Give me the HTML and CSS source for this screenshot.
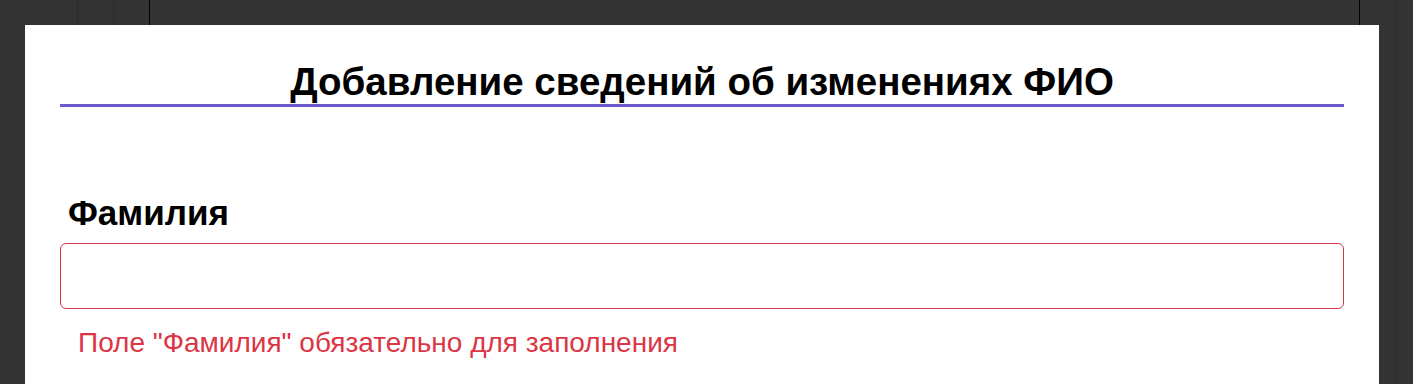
FILE: index.html
```html
<!DOCTYPE html>
<html lang="ru">
<head>
<meta charset="utf-8">
<title>Добавление сведений об изменениях ФИО</title>
<link rel="stylesheet" href="styles.css">
</head>
<body>
<div class="panel">
  <h1 class="title">Добавление сведений об изменениях ФИО</h1>
  <div class="field">
    <label class="field-label" for="surname">Фамилия</label>
    <input class="field-input is-invalid" id="surname" type="text">
    <div class="field-error">Поле "Фамилия" обязательно для заполнения</div>
  </div>
</div>
</body>
</html>
```
FILE: styles.css
```css
html, body {
  margin: 0;
  padding: 0;
  height: 100%;
}
body {
  background-color: #333333;
  background-image:
    linear-gradient(to right, transparent 77px, #2b2b2b 77px, #2b2b2b 78px, transparent 78px),
    linear-gradient(to right, transparent 113px, #2b2b2b 113px, #2b2b2b 114px, transparent 114px),
    linear-gradient(to right, transparent 149px, #000 149px, #000 150px, transparent 150px),
    linear-gradient(to right, transparent 1359px, #000 1359px, #000 1360px, transparent 1360px),
    linear-gradient(to right, transparent 1395px, #2b2b2b 1395px, #2b2b2b 1396px, transparent 1396px);
  font-family: "Liberation Sans", Arial, sans-serif;
  overflow: hidden;
}
.panel {
  margin: 25px 0 0 25px;
  width: 1354px;
  height: 359px;
  background: #ffffff;
  padding: 0 35px;
  box-sizing: border-box;
}
.title {
  margin: 0;
  padding-top: 35px;
  font-size: 38.5px;
  line-height: 44px;
  font-weight: bold;
  color: #000;
  text-align: center;
  border-bottom: 3px solid #6a5acd;
}
.field {
  display: flex;
  flex-direction: column;
  padding-top: 86px;
}
.field-label {
  font-size: 35px;
  line-height: 40px;
  font-weight: bold;
  color: #000;
  padding-left: 8px;
  margin-bottom: 10px;
}
.field-input {
  height: 66px;
  box-sizing: border-box;
  border: 1px solid #dc3545;
  border-radius: 6px;
  background: #fff;
  outline: none;
  font-size: 24px;
  padding: 0 16px;
}
.field-error {
  margin-top: 18px;
  padding-left: 18px;
  font-size: 28px;
  line-height: 32px;
  color: #dc3545;
}
```
